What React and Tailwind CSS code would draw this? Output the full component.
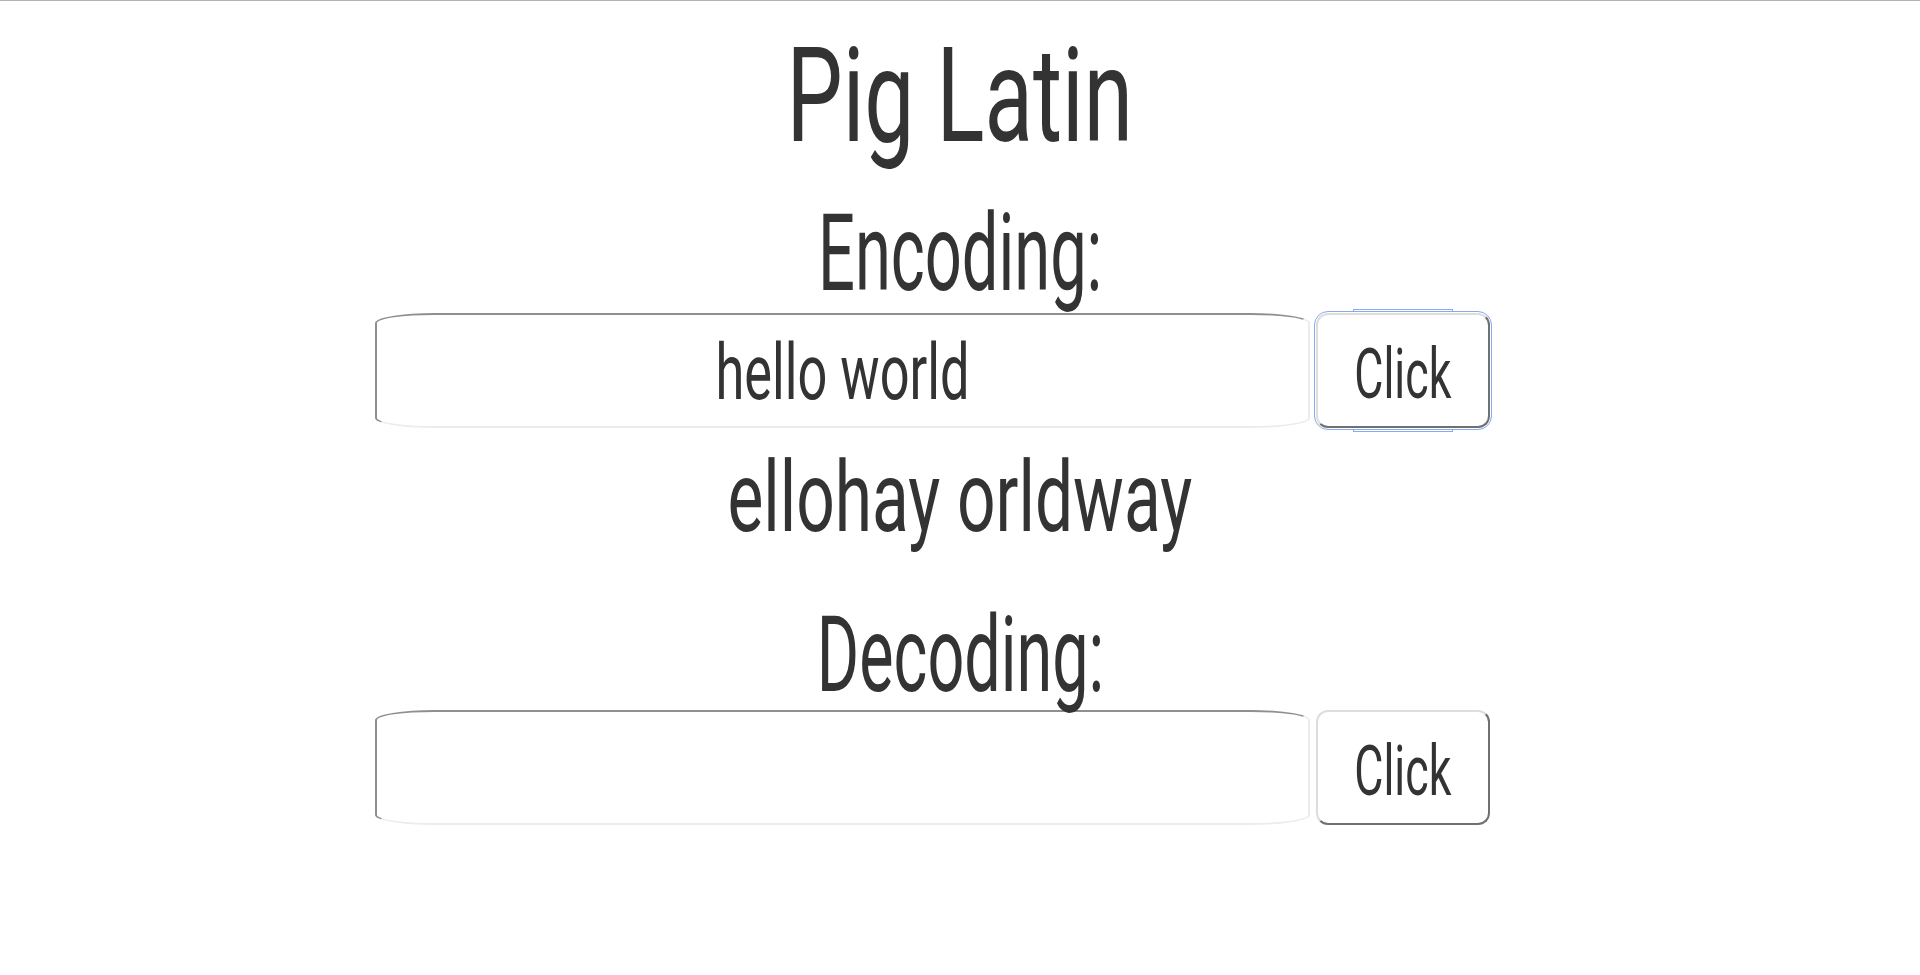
import React, { useState } from "react";

function encodeWord(w) {
  if (!w) return w;
  const m = w.match(/^([^aeiouAEIOU]*)(.*)$/);
  if (!m[1]) return w + "way";
  if (!m[2]) return w + "ay";
  return m[2] + m[1] + "ay";
}

export default function App() {
  const [enc, setEnc] = useState("hello world");
  const [encOut, setEncOut] = useState("ellohay orldway");
  const [dec, setDec] = useState("");
  const [decOut, setDecOut] = useState("");

  return (
    <div className="min-h-[975px] w-full bg-white border-t border-[#b3b3b3] text-[#333333] font-['Roboto',sans-serif] overflow-hidden">
      <div className="flex flex-col items-center pt-[30px]">
        <h1 className="h-[129px] text-[131px] leading-none font-normal">
          <span className="inline-block scale-x-[0.68]">Pig Latin</span>
        </h1>
        <h2 className="mt-[40px] h-[107px] text-[107px] leading-none font-normal">
          <span className="inline-block scale-x-[0.607]">Encoding:</span>
        </h2>
      </div>

      <div className="mx-auto mt-[6px] w-[1170px] flex gap-[6px]">
        <div className="w-[935px] h-[115px] border-2 border-solid border-t-[#8f8f8f] border-l-[#8f8f8f] border-b-[#ececec] border-r-[#ececec] rounded-[60px/10px] flex items-center overflow-hidden">
          <input
            value={enc}
            onChange={(e) => setEnc(e.target.value)}
            className="w-full h-full bg-transparent outline-none border-0 text-center text-[77px] leading-none text-[#333333] scale-x-[0.68] font-['Roboto',sans-serif] pt-[4px]"
          />
        </div>
        <div className="relative">
          <button
            onClick={() => setEncOut(enc.split(" ").map(encodeWord).join(" "))}
            className="w-[174px] h-[115px] bg-white border-2 border-solid border-t-[#dddddd] border-l-[#dddddd] border-b-[#707070] border-r-[#707070] rounded-[12px] outline outline-1 outline-offset-1 outline-[#86a9ef] text-[70px] leading-none text-[#333333] flex items-center justify-center pt-[6px]"
          >
            <span className="inline-block scale-x-[0.64]">Click</span>
          </button>
          <div className="absolute left-[37px] top-[-4px] w-[100px] h-[3px] border-t border-l border-r border-[#86a9ef]"></div>
          <div className="absolute left-[37px] bottom-[-4px] w-[100px] h-[3px] border-b border-l border-r border-[#86a9ef]"></div>
        </div>
      </div>

      <div className="flex flex-col items-center">
        <div className="mt-[21px] h-[96px] text-[98px] leading-none">
          <span className="inline-block scale-x-[0.69]">{encOut}</span>
        </div>
        <h2 className="mt-[57px] h-[105px] text-[106px] leading-none font-normal">
          <span className="inline-block scale-x-[0.61]">Decoding:</span>
        </h2>
      </div>

      <div className="mx-auto mt-[3px] w-[1170px] flex gap-[6px]">
        <div className="w-[935px] h-[115px] border-2 border-solid border-t-[#8f8f8f] border-l-[#8f8f8f] border-b-[#ececec] border-r-[#ececec] rounded-[60px/10px] flex items-center overflow-hidden">
          <input
            value={dec}
            onChange={(e) => setDec(e.target.value)}
            className="w-full h-full bg-transparent outline-none border-0 text-center text-[77px] leading-none text-[#333333] scale-x-[0.68] font-['Roboto',sans-serif] pt-[4px]"
          />
        </div>
        <button
          onClick={() => setDecOut(dec)}
          className="w-[174px] h-[115px] bg-white border-2 border-solid border-t-[#dddddd] border-l-[#dddddd] border-b-[#707070] border-r-[#707070] rounded-[12px] text-[70px] leading-none text-[#333333] flex items-center justify-center pt-[6px]"
        >
          <span className="inline-block scale-x-[0.64]">Click</span>
        </button>
      </div>
      {decOut ? (
        <div className="text-center text-[96px] leading-none mt-[23px]">
          <span className="inline-block scale-x-[0.68]">{decOut}</span>
        </div>
      ) : null}
    </div>
  );
}
